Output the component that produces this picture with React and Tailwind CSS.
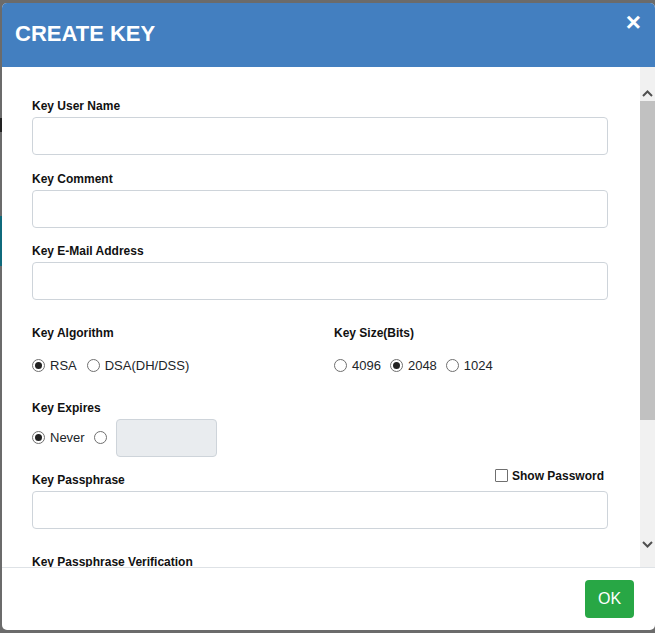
import React from "react";

function Radio({ checked }) {
  return (
    <span className="w-[13px] h-[13px] rounded-full border border-[#6f6f6f] bg-white flex items-center justify-center shrink-0">
      {checked && <span className="w-[7px] h-[7px] rounded-full bg-[#222]" />}
    </span>
  );
}

function RadioOpt({ checked, label }) {
  return (
    <label className="flex items-center gap-[5px] text-[13px] text-[#212529]">
      <Radio checked={checked} />
      <span>{label}</span>
    </label>
  );
}

function Field({ label, mt }) {
  return (
    <div className={mt}>
      <div className="text-[12px] leading-[14px] font-bold text-[#111]">{label}</div>
      <div className="mt-[4px] h-[38px] rounded-[4px] border border-[#ced4da] bg-white" />
    </div>
  );
}

function App() {
  return (
    <div
      className="w-[655px] h-[633px] bg-[#6b6b6b] overflow-hidden pt-[3px]"
      style={{ fontFamily: '"Liberation Sans", Arial, sans-serif' }}
    >
      <div className="flex">
        <div className="w-[2px] flex flex-col shrink-0">
          <div className="h-[115px]" />
          <div className="h-[14px] bg-[#222]" />
          <div className="h-[84px]" />
          <div className="h-[50px] bg-[#0f6a7c]" />
        </div>
        <div className="w-[653px] h-[627px] bg-white rounded-[5px] overflow-hidden flex flex-col">
          {/* header */}
          <div className="h-[64px] bg-[#437fc0] flex items-center justify-between pl-[13px] pr-[14px] shrink-0">
            <h2 className="text-[22px] font-bold text-white mb-[4px]">CREATE KEY</h2>
            <span className="text-white text-[26px] font-bold leading-none -mt-[26px]">×</span>
          </div>

          {/* body */}
          <div className="flex h-[500px] shrink-0">
            <div className="flex-1 overflow-hidden pl-[30px] pr-[32px] pt-[32px]">
              <Field label="Key User Name" />
              <Field label="Key Comment" mt="mt-[17px]" />
              <Field label="Key E-Mail Address" mt="mt-[16px]" />

              <div className="mt-[26px] flex">
                <div className="w-[302px]">
                  <div className="text-[12px] leading-[14px] font-bold text-[#111]">Key Algorithm</div>
                  <div className="mt-[16px] flex items-center gap-[10px]">
                    <RadioOpt checked label="RSA" />
                    <RadioOpt label="DSA(DH/DSS)" />
                  </div>
                </div>
                <div>
                  <div className="text-[12px] leading-[14px] font-bold text-[#111]">Key Size(Bits)</div>
                  <div className="mt-[16px] flex items-center gap-[9px]">
                    <RadioOpt label="4096" />
                    <RadioOpt checked label="2048" />
                    <RadioOpt label="1024" />
                  </div>
                </div>
              </div>

              <div className="mt-[25px] text-[12px] leading-[14px] font-bold text-[#111]">Key Expires</div>
              <div className="mt-[4px] flex items-center gap-[9px]">
                <RadioOpt checked label="Never" />
                <Radio />
                <div className="w-[101px] h-[38px] rounded-[4px] border border-[#ced4da] bg-[#e9ecef]" />
              </div>

              <div className="mt-[12px] flex items-end justify-between">
                <div className="text-[12px] leading-[14px] font-bold text-[#111]">Key Passphrase</div>
                <label className="flex items-center gap-[4px] mr-[4px] mb-[4px]">
                  <span className="w-[13px] h-[13px] border border-[#6f6f6f] rounded-[1px] bg-white" />
                  <span className="text-[12px] leading-[14px] font-bold text-[#111]">Show Password</span>
                </label>
              </div>
              <div className="mt-[4px] h-[38px] rounded-[4px] border border-[#ced4da] bg-white" />

              <div className="mt-[26px] text-[12px] leading-[14px] font-bold text-[#111]">
                Key Passphrase Verification
              </div>
            </div>

            {/* scrollbar */}
            <div className="w-[15px] bg-[#f1f1f1] flex flex-col items-center shrink-0">
              <div className="h-[34px] flex items-end justify-center pb-[4px]">
                <svg width="11" height="7" viewBox="0 0 11 7">
                  <path d="M1 6 L5.5 1.5 L10 6" fill="none" stroke="#505050" strokeWidth="2" />
                </svg>
              </div>
              <div className="w-[15px] h-[319px] bg-[#c1c1c1]" />
              <div className="flex-1" />
              <div className="h-[34px] flex items-start justify-center pt-[8px]">
                <svg width="11" height="7" viewBox="0 0 11 7">
                  <path d="M1 1 L5.5 5.5 L10 1" fill="none" stroke="#505050" strokeWidth="2" />
                </svg>
              </div>
            </div>
          </div>

          {/* footer */}
          <div className="flex-1 border-t border-[#dee2e6] flex items-start justify-end pt-[12px] pr-[21px]">
            <button className="w-[49px] h-[38px] rounded-[4px] bg-[#28a745] text-white text-[16px]">OK</button>
          </div>
        </div>
      </div>
    </div>
  );
}

export default App;
